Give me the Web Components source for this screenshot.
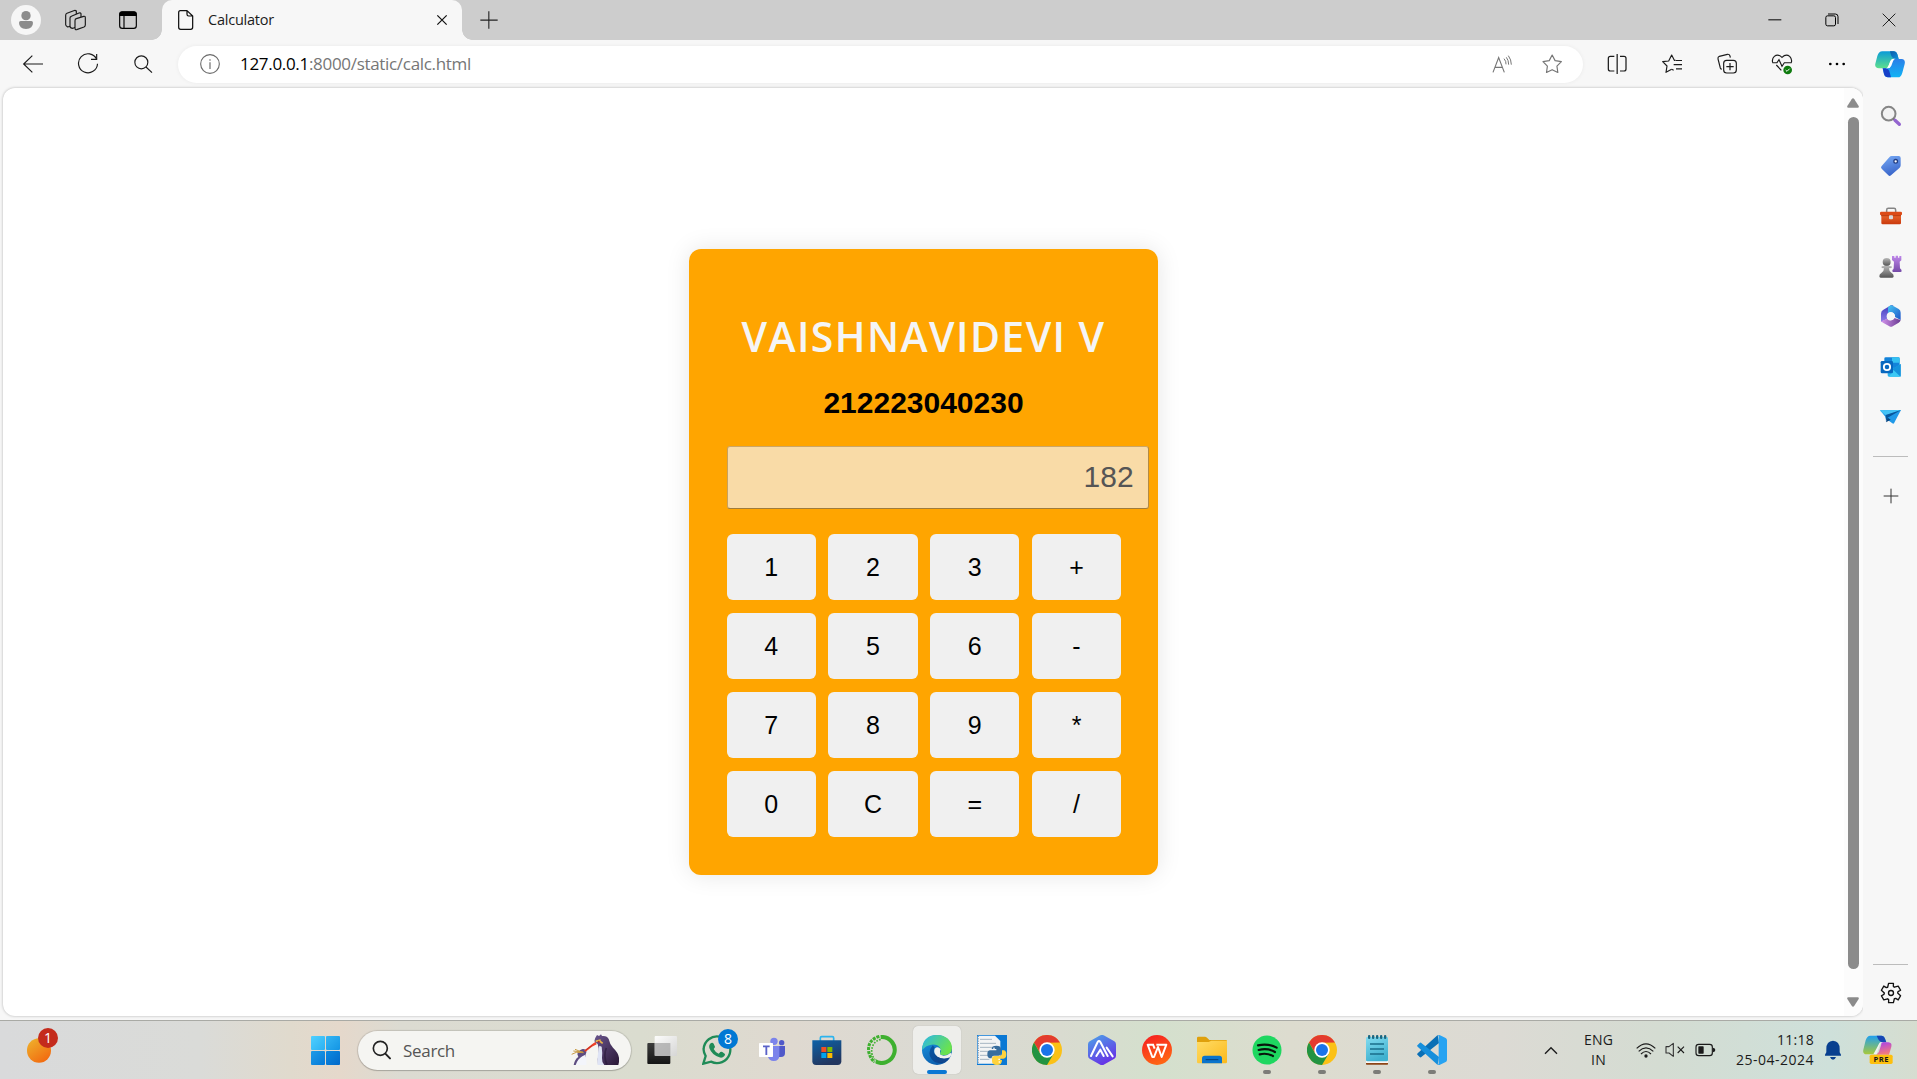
<!DOCTYPE html>
<html lang="en">
<head>
<meta charset="utf-8">
<title>Calculator</title>
<style>
html,body{margin:0;height:100%;overflow:hidden}
body{font-family:"Open Sans","Noto Sans",sans-serif;color:#1b1b1b}
</style>
</head>
<body>
<desktop-screen></desktop-screen>
<script>
const star=(cx,cy,R,r,n=5)=>{let p=[];for(let i=0;i<n*2;i++){const a=-Math.PI/2+i*Math.PI/n,q=i%2?r:R;p.push((cx+q*Math.cos(a)).toFixed(1)+','+(cy+q*Math.sin(a)).toFixed(1));}return p.join(' ');};
const lg=(id,a,b,x2=1,y2=1)=>`<linearGradient id="${id}" x1="0" y1="0" x2="${x2}" y2="${y2}"><stop offset="0" stop-color="${a}"/><stop offset="1" stop-color="${b}"/></linearGradient>`;
const gearPath=(cx,cy)=>{let d='';for(let i=0;i<6;i++){const t=-90+i*60;const pt=(a,r)=>{a=(t+a)*Math.PI/180;return (cx+r*Math.cos(a)).toFixed(1)+' '+(cy+r*Math.sin(a)).toFixed(1)};d+=(i?'L':'M')+pt(-14,30)+'L'+pt(14,30)+'L'+pt(19,21.5)+'L'+pt(30,20);}return d+'Z';};
const chromeMark=(c)=>`<circle cx="${c}" cy="150" r="45" fill="#fbc116"/>
<path d="M${c-39} 127.500A45 45 0 0 1 ${c+39} 127.500L${c} 128L${c-19} 161Z" fill="#e33b2e"/>
<path d="M${c-39} 127.500A45 45 0 0 0 ${c} 195L${c+20} 161L${c-20} 161Z" fill="#229342"/>
<circle cx="${c}" cy="150" r="23" fill="#fff"/><circle cx="${c}" cy="150" r="18" fill="#1a73e8"/>`;

/* name: [width, height, viewBox, markup]; three viewBox units make one pixel */
const ICONS={
avatar:[30,30,'33 15 90 90',`<circle cx="78" cy="60" r="45" fill="#f6f6f6"/><circle cx="78" cy="47" r="14" fill="#8c8c8c"/><path d="M57 68q0-5 5-5h32q5 0 5 5q0 18-21 19q-21-1-21-19z" fill="#8c8c8c"/>`],
workspaces:[23,22,'192 27 69 66',`<g fill="#cdcdcd" stroke="#1b1b1b" stroke-width="3.500" stroke-linejoin="round"><path d="M197 46q0-4 4-6l20-8q5-2 8 1l0 40l-26 8q-6-4-6-7z"/><path d="M210 54q0-4 4-5l23-10q5-1 6 2v34l-24 10q-9 0-9-6z"/><path d="M225 62q0-5 4-6l22-7q5-1 5 4v22q0 4-4 6l-22 8q-5 1-5-4z"/></g>`],
tabmenu:[20,20,'354 30 60 60',`<rect x="359" y="36" width="50" height="49" rx="8" fill="none" stroke="#000" stroke-width="3.500"/><path d="M358 48v-6q0-8 8-8h36q8 0 8 8v6z"/><path d="M372 47v38" stroke="#000" stroke-width="3.500"/>`],
doc:[18,22,'532 27 54 66',`<path d="M542 32h20l17 16v34q0 6-6 6h-30q-6 0-6-6V38q0-6 5-6zM562 32v11q0 5 5 5h12" fill="none" stroke="#111" stroke-width="3.700" stroke-linejoin="round"/>`],
tabclose:[14,14,'1306 41 42 42',`<path d="M1313 48l28 28M1341 48l-28 28" stroke="#111" stroke-width="3.700"/>`],
plus:[18,18,'1439 32 54 54',`<path d="M1440 59.500h52M1465.500 33v52" stroke="#222" stroke-width="3.300"/>`],
back:[22,20,'66 160 66 60',`<path d="M129 190H71M97 165L71 190L97 215" fill="none" stroke="#1b1b1b" stroke-width="3.500"/>`],
reload:[22,22,'231 159 66 66',`<path d="M290 178A28.500 28.500 0 1 0 292.500 191" fill="none" stroke="#1b1b1b" stroke-width="3.500"/><path d="M290 162v16h-17" fill="none" stroke="#1b1b1b" stroke-width="3.500"/>`],
search:[20,20,'399 161 60 60',`<circle cx="424" cy="186" r="19.500" fill="none" stroke="#1b1b1b" stroke-width="3.500"/><path d="M438 200l18 17" stroke="#1b1b1b" stroke-width="3.500"/>`],
info:[20,20,'601 161 60 60',`<circle cx="631" cy="191" r="28" fill="none" stroke="#6b6b6b" stroke-width="3.300"/><path d="M631 186v20" stroke="#6b6b6b" stroke-width="3.500"/><circle cx="631" cy="179" r="2.500" fill="#6b6b6b"/>`],
read:[20,20,'97 158 60 60',`<g fill="none" stroke="#767676" stroke-width="3.400"><path d="M100 213L117 169L134 213M106 198H128"/><path d="M133 172q7 8 6 17M140 168q7 9 7 22M146 163q9 12 9 27" stroke-width="3"/></g>`],
star:[22,22,'242 158 66 66',`<polygon points="${star(275.5,193,29,15)}" fill="none" stroke="#767676" stroke-width="3.500" stroke-linejoin="round"/>`],
split:[20,22,'442 159 60 66',`<g fill="none" stroke="#1b1b1b" stroke-width="3.700"><path d="M464 169H452q-6 0-6 6v32q0 6 6 6h12M472.500 162v60M481 169h12q6 0 6 6v32q0 6-6 6h-12"/></g>`],
favs:[22,22,'606 158 66 66',`<g fill="none" stroke="#1b1b1b" stroke-width="3.500" stroke-linejoin="round"><path d="M650 180h-4L638 164L629 182L611 184L624 197L621 216L638 207"/><path d="M651 180.500h18M644 193h25M651 205.500h18M638 207l6 3"/></g>`],
collect:[22,22,'771 159 66 66',`<g fill="none" stroke="#1b1b1b" stroke-width="3.500"><path d="M788 208q-3-1-4-4l-7-27q-1-6 4-8l24-6q6-1 8 5l1 5"/><rect x="794" y="181" width="38" height="38" rx="9"/><path d="M813 189v22M802 200h22"/></g>`],
health:[22,22,'936 161 66 66',`<path d="M941 190q-3-12 5-19q11-9 23 3q12-12 23-3q8 8 5 19M952 197l15 16" fill="none" stroke="#1b1b1b" stroke-width="3.500"/><path d="M940 190h14l6-9l9 20l7-11h22" fill="none" stroke="#1b1b1b" stroke-width="3.200"/><circle cx="986" cy="212" r="13" fill="#0f7b0f"/><path d="M980 212l4 4l8-8" fill="none" stroke="#fff" stroke-width="3"/>`],
dots:[18,6,'1107 182 54 18',`<circle cx="1114" cy="191" r="4"/><circle cx="1134" cy="191" r="4"/><circle cx="1154" cy="191" r="4"/>`],
copilot:[30,27,'1248 152 90 81',`<defs>${lg('a','#0a9bd8','#5ee08c',0,1)}${lg('b','#2b7fe8','#11b4f5',0,1)}${lg('c','#0b5aa8','#0f91dc')}</defs><path d="M1270 153h34q8 0 11 9l4 14h-14q-8 0-11 8l-8 20h-26q-14-1-11-14l6-23q4-14 15-14z" fill="url(#a)"/><path d="M1293 153h11q8 0 11 9l4 14h-10q-12 0-16-23z" fill="url(#c)"/><path d="M1317 231h-30q-9 0-12-10l-4-17h12q9 0 12-9l7-19h26q12 1 9 15l-7 26q-4 14-13 14z" fill="url(#b)"/><path d="M1296 231h-9q-9 0-12-10l-4-17h9q10 2 12 12z" fill="#1740c8"/><path d="M1304 175q-8 0-11 9l-4 11q-3 9-10 9h6q9 0 12-8l5-13q2-7 8-8z" fill="#fff"/>`],
min:[14,14,'923 38 42 42',`<path d="M924 58.500h39" stroke="#000" stroke-width="3"/>`],
restore:[14,14,'1094 38 42 42',`<rect x="1096.500" y="46.500" width="29" height="30" rx="5" fill="none" stroke="#000" stroke-width="3"/><path d="M1103 41h22q8 0 8 8v22" fill="none" stroke="#000" stroke-width="3"/>`],
close:[14,14,'1267 38 42 42',`<path d="M1269 40l38 38M1307 40l-38 38" stroke="#222" stroke-width="3"/>`],
sSearch:[22,22,'178 72 66 66',`<circle cx="204" cy="98" r="20.500" fill="#f2f2f2" stroke="#858585" stroke-width="6"/><path d="M218 113l6 6" stroke="#6b6b6b" stroke-width="5"/><path d="M223 118l13 12" stroke="#9465cf" stroke-width="10" stroke-linecap="round"/>`],
sTag:[22,22,'181 225 66 66',`<defs>${lg('a','#78abf5','#3b67cb',.3,1)}</defs><path d="M216 228h21q6 0 6 6v22q0 4-3 7L214 286q-4 4-8 0L186 266q-4-4 0-8l23-26q3-4 7-4z" fill="url(#a)"/><circle cx="228" cy="244" r="5.500" fill="#fff" stroke="#243f84" stroke-width="4"/>`],
sTool:[22,18,'180 383 66 54',`<defs>${lg('a','#ec6a31','#c9390c',0,1)}</defs><path d="M200 398v-6q0-5 5-5h17q5 0 5 5v6" fill="none" stroke="#858585" stroke-width="4.500"/><rect x="184" y="404" width="59" height="31" rx="4" fill="url(#a)"/><rect x="180" y="397" width="66" height="11" rx="4" fill="#dc4b18"/><path d="M183 409h60" stroke="#a42c06" stroke-width="2"/><rect x="207" y="408" width="12" height="12" rx="3" fill="#d8dadd"/>`],
sGame:[23,23,'179 523 69 69',`<defs>${lg('a','#b9b9b9','#555',0,1)}${lg('b','#bf87ea','#754aa8',0,1)}</defs><path d="M218 526h7v5h4v-6h7v6h4v-5h6v13l-5 4l1 20q5 3 5 8q0 3-4 3h-23l-1-6q4-1 4-5l1-20l-6-5z" fill="url(#b)"/><circle cx="202" cy="544" r="12" fill="url(#a)"/><path d="M187 557q15-4 30 0v5l-8 1q0 10 8 14q6 3 6 10q0 4-4 4h-35q-4 0-4-4q0-7 6-10q8-4 8-14l-7-1z" fill="url(#a)"/>`],
s365:[22,23,'181 675 66 69',`<defs>${lg('a','#3f3bbd','#8f7de8',0,1)}${lg('b','#45c7f3','#2254c8')}${lg('c','#d495ed','#6a3b92',1,0)}</defs><path d="M214 676l-24 14q-6 4-6 11v25l16-8q5-3 5-9v-18q0-5 4-8l13-8z" fill="url(#a)"/><path d="M213 676q4-1 8 2l16 9q6 4 6 11v22l-17-9q2-11-12-15q-9 1-9 9v-21q0-5 8-8z" fill="url(#b)"/><path d="M184 724l19-8q9 12 21-2l19 6q-1 5-6 8l-18 11q-5 3-10 0l-19-11q-5-3-6-4z" fill="url(#c)"/><circle cx="213" cy="709" r="12" fill="#f7f7f7"/>`],
sOutlook:[22,22,'181 825 66 66',`<rect x="194" y="829" width="46" height="40" rx="4" fill="#1383da"/><path d="M217 829h19q4 0 4 4v12h-23z" fill="#35c1f1"/><path d="M204 856l20 5l19-12v34q0 4-4 4h-31q-4 0-4-4z" fill="#29b0ec"/><path d="M224 864l19 23h-35z" fill="#3cc9f5"/><path d="M218 864l25-15v38z" fill="#1592dc"/><rect x="183" y="840" width="37" height="37" rx="4" fill="#0868bf"/><circle cx="202" cy="858" r="9.500" fill="none" stroke="#fff" stroke-width="5.500"/>`],
sSend:[22,16,'180 985 66 48',`<path d="M180 989l63-1l-21 40q-2 2-5 0l-18-13q-3-2-3-7z" fill="#2099e8"/><path d="M180 989l63-1l-45 16q-15-10-18-15z" fill="#44c3f5"/><path d="M197 1003l46-15l-40 23l-5 13z" fill="#09579c"/><path d="M198 1025l5-14l9 6z" fill="#06437f"/>`],
gear:[22,22,'1139 125 66 66',`<path d="${gearPath(1172,158)}" fill="none" stroke="#111" stroke-width="4" stroke-linejoin="round"/><circle cx="1172" cy="158" r="7.500" fill="none" stroke="#111" stroke-width="4"/>`],
sPlus:[16,16,'186 1223 48 48',`<path d="M188 1247h44M210 1225v44" stroke="#333" stroke-width="3"/>`],
up:[12,10,'0 0 36 30',`<path d="M18 1q2 0 4 3l13 20q2 5-3 5H4q-5 0-3-5L14 4q2-3 4-3z" fill="#8b8b8b"/>`],
down:[12,10,'0 0 36 30',`<path d="M18 29q2 0 4-3l13-20q2-5-3-5H4Q-1 1 1 6l13 20q2 3 4 3z" fill="#8b8b8b"/>`],
weather:[24,25,'81 82 72 75',`<defs>${lg('a','#eeb62e','#f26a10',.7,1)}</defs><rect x="81" y="83" width="72" height="73" rx="36" fill="url(#a)"/>`],
start:[29,29,'933 78 87 87',`<defs>${lg('a','#4fd0ff','#2bb0f2')}${lg('b','#35b5f3','#1395e4')}${lg('c','#1f9ce8','#0679d7')}${lg('d','#0d89e0','#0369c9')}</defs><rect x="933" y="78" width="42" height="42" rx="3" fill="url(#a)"/><rect x="978" y="78" width="42" height="42" rx="3" fill="url(#b)"/><rect x="933" y="123" width="42" height="42" rx="3" fill="url(#c)"/><rect x="978" y="123" width="42" height="42" rx="3" fill="url(#d)"/>`],
tSearch:[20,20,'1114 91 60 60',`<circle cx="1139" cy="116" r="21" fill="none" stroke="#222" stroke-width="5"/><path d="M1154 132l14 14" stroke="#222" stroke-width="6" stroke-linecap="round"/>`],
penguins:[50,32,'64 46 150 96',`<defs>${lg('a','#6b568f','#2a1836')}</defs>
<path d="M72 139q3-17 14-24l-3-9q4-12 16-15q8-1 11 5q1 5-2 11q2 16-1 32z" fill="#5d4c80"/><path d="M78 139q7-19 20-26l9-5q5 12 3 31z" fill="#f3f5fb"/><path d="M66 107l14-6l22 1M71 97l29 3M76 92l20 8" stroke="#c79b45" stroke-width="3" fill="none"/>
<path d="M103 96L128 76l10-7l3 8l-14 7L108 99z" fill="#ef4128"/><path d="M106 95l22-15" stroke="#9c1f18" stroke-width="1.500"/>
<path d="M134 68q3-13 8-19l6 3l6-5l3 5q15-2 20 9q3 15 13 26q16 15 18 30q1 13-2 22h-61q-3-18 2-34q2-18-3-29z" fill="url(#a)"/><path d="M144 139q-3-20 5-58l7 3q3 20 1 34q-1 12 7 21z" fill="#dfe4f5"/><path d="M138 68l15-4M150 67l9 7" stroke="#e7b44b" stroke-width="5"/><circle cx="147" cy="69" r="3" fill="#be2a24"/><path d="M170 88q-10 24 2 50" stroke="#22132f" stroke-width="5" fill="none" opacity=".5"/>`],
taskview:[30,30,'50 105 90 90',`<defs>${lg('a','#3c3c3c','#151515',0,1)}${lg('b','#fff','#d5d5d5')}</defs><rect x="51" y="129" width="69" height="63" rx="3" fill="url(#a)"/><rect x="73" y="108" width="67" height="60" rx="3" fill="url(#b)" opacity=".93"/><rect x="73" y="129" width="47" height="39" fill="#aaa" opacity=".75"/>`],
whatsapp:[30,30,'216 105 90 90',`<path d="M220 191l7-23q-7-12-6-21A40 40 0 1 1 243 185z" fill="none" stroke="#1f8b57" stroke-width="7"/><path d="M243 129q5-3 8 2l4 9q0 3-4 7q5 10 15 14l5-5q3-2 6 0l7 5q3 3-1 7q-6 7-15 4q-23-8-30-28q-2-10 5-15z" fill="#1f8b57"/>`],
teams:[30,30,'381 105 90 90',`<circle cx="432" cy="124" r="11" fill="#7b83eb"/><circle cx="455" cy="128" r="8" fill="#5059c9"/><path d="M440 138h25v21q0 12-12 12h-13z" fill="#5059c9"/><path d="M413 138h35v26q0 19-17 19q-14 0-18-14z" fill="#7b83eb"/><rect x="387" y="129" width="42" height="42" rx="2" fill="#fff"/><path d="M399 139h20M409 139v26" stroke="#5a62c8" stroke-width="5.500"/>`],
store:[30,30,'545 105 90 90',`<defs>${lg('a','#0d62a8','#22365f',.4,1)}</defs><path d="M570 124v-10q0-4 4-4h32q4 0 4 4v10" fill="none" stroke="#2cb4ee" stroke-width="5"/><path d="M546 121h87v63q0 11-11 11h-65q-11 0-11-11z" fill="url(#a)"/><path d="M573 141h15v15h-15z" fill="#f25022"/><path d="M591 141h15v15h-15z" fill="#7fba00"/><path d="M573 159h15v15h-15z" fill="#00a4ef"/><path d="M591 159h15v15h-15z" fill="#ffb900"/>`],
anaconda:[30,30,'711 105 90 90',`<path d="M752 111A39 39 0 1 1 733 182" fill="none" stroke="#3eb02f" stroke-width="12"/><path d="M748 109Q712 120 716 155Q720 174 733 186" fill="none" stroke="#3eb02f" stroke-width="9" stroke-dasharray="9 3"/><path d="M752 118Q724 126 725 158Q727 170 734 178" fill="none" stroke="#3eb02f" stroke-width="5" stroke-dasharray="5 4"/><path d="M736 179l-2 14" stroke="#ddd" stroke-width="3"/>`],
edge:[30,30,'876 105 90 90',`<defs>${lg('a','#2bb7ea','#6be34c',1,.5)}${lg('b','#1b9ce8','#0b5cab',.5,1)}${lg('c','#0b57a5','#0c3d85')}</defs><circle cx="921" cy="150" r="45" fill="url(#b)"/><path d="M877 141Q882 106 921 105Q963 107 966 144Q966 166 941 166Q930 166 930 160Q935 152 930 143Q922 132 904 134Q886 137 877 150z" fill="url(#a)"/><path d="M908 136Q890 158 905 178Q920 196 946 186Q956 180 960 172Q940 180 922 169Q906 158 914 142z" fill="url(#c)"/><path d="M930 160q-1 6 11 7q12 0 20-8l5 2l-7 12q-20 7-37-3q-13-11-8-24q10-9 18 2q0 3-2 4z" fill="#f1f1ee"/><path d="M960 172Q940 181 923 171Q918 167 915 163Q919 191 946 186z" fill="#10478f"/>`],
python:[30,30,'1041 105 90 90',`<rect x="1041" y="105" width="90" height="90" fill="#0a78d4"/><path d="M1043 107h52l16 16v68h-68z" fill="#f3f4f5"/><path d="M1050 118h36M1050 130h48M1050 142h40M1050 154h30M1050 166h24M1050 178h28" stroke="#a5b5c2" stroke-width="3"/><path d="M1045 108v82" stroke="#758b9d" stroke-width="3" stroke-dasharray="3 4"/><path d="M1085 147q0-10 14-10q14 0 14 10v12q0 8-8 8h-13q-7 0-7 8h-6q-7-2-7-13q0-11 9-11h18v-4z" fill="#386d9e"/><path d="M1116 151h5q8 1 8 12q0 13-9 13h-15v4h11q0 15-15 15q-15 0-15-11v-8q0-8 8-8h12q10 0 10-9z" fill="#ffd23c"/><circle cx="1092" cy="145" r="2.500" fill="#fff"/><circle cx="1108" cy="186" r="2.500" fill="#fff"/>`],
chrome:[30,30,'36 105 90 90',chromeMark(81)],
ai:[30,30,'201 105 90 90',`<defs>${lg('a','#4ba7e8','#6634e6',.5,1)}</defs><path d="M241 106q5-3 10 0l32 18q5 3 5 9v34q0 6-5 9l-32 18q-5 3-10 0l-32-18q-5-3-5-9v-34q0-6 5-9z" fill="url(#a)"/><path d="M213 168l20-42q4-6 8 0l22 42M229 168l12-19l10 19M260 143l18 26" fill="none" stroke="#fff" stroke-width="6" stroke-linecap="round" stroke-linejoin="round"/>`],
wps:[30,30,'366 105 90 90',`<defs>${lg('a','#f51b22','#ff6414',.4,1)}</defs><circle cx="411" cy="150" r="45" fill="url(#a)"/><path d="M402 134h-19l14 37h5l12-30l11 30h0l14-37h-30M399 134l5 12M425 171l-11-30" fill="none" stroke="#fff" stroke-width="6" stroke-linejoin="round"/>`],
folder:[30,30,'531 105 90 90',`<defs>${lg('a','#ffdc66','#fbb91b')}</defs><path d="M531 114q0-4 4-4h20q3 0 6 3l7 7h50q3 0 3 4v10h-90z" fill="#dfa00c"/><path d="M531 126h35l8-4h47v64q0 4-4 4h-82q-4 0-4-4z" fill="url(#a)"/><path d="M546 190v-15q0-8 8-8h44q8 0 8 8v15z" fill="#0b74cc"/><path d="M557 179h38" stroke="#073f79" stroke-width="3"/>`],
spotify:[30,30,'696 105 90 90',`<circle cx="741" cy="150" r="43.500" fill="#1ed760"/><path d="M714 136q30-7 56 7M716 150q27-7 49 6M719 163q22-5 40 5" fill="none" stroke="#08150c" stroke-width="6.500" stroke-linecap="round"/>`],
notepad:[30,30,'1026 105 90 90',`<defs>${lg('a','#83dcf1','#3fb1cf',.4,1)}</defs><rect x="1038" y="180" width="66" height="14" rx="2" fill="#8d4516"/><path d="M1038 180h66v9h-66z" fill="#f7f7f7"/><rect x="1038" y="111" width="66" height="73" rx="4" fill="url(#a)"/><g fill="#1c6780"><rect x="1044" y="105" width="7" height="12" rx="3"/><rect x="1056" y="105" width="7" height="12" rx="3"/><rect x="1068" y="105" width="7" height="12" rx="3"/><rect x="1080" y="105" width="7" height="12" rx="3"/><rect x="1092" y="105" width="7" height="12" rx="3"/></g><path d="M1050 132h42M1050 147h42M1050 162h42" stroke="#1a6d8a" stroke-width="4.500"/>`],
vscode:[30,30,'1191 105 90 90',`<path d="M1253 105l4 24l-54 43q-2 1-4-1l-6-6q-3-2 0-5z" fill="#0a6fb5"/><path d="M1253 195l4-24l-54-43q-2-1-4 1l-6 6q-3 2 0 5z" fill="#168fdc"/><path d="M1253 195q4 1 7-1l17-8q4-2 4-7v-58q0-5-4-7l-17-8q-3-2-7-1q3 1 3 5v80q0 4-3 5z" fill="#27a3f2"/>`],
chevron:[14,10,'132 313 42 30',`<path d="M135 339l18-18l18 18" fill="none" stroke="#1b1b1b" stroke-width="4"/>`],
wifi:[20,16,'408 303 60 48',`<g fill="none" stroke="#1b1b1b" stroke-width="3.500"><path d="M410 322q28-27 56 0"/><path d="M416 331q22-21 44 0"/><path d="M423 339q15-15 30 0"/></g><circle cx="438" cy="345" r="5" fill="#1b1b1b"/>`],
volume:[20,16,'497 306 60 48',`<path d="M500 320h9l13-10v39l-13-10h-9z" fill="none" stroke="#333" stroke-width="3.300" stroke-linejoin="round"/><path d="M535 320l19 19M554 320l-19 19" stroke="#1b1b1b" stroke-width="3.300"/>`],
battery:[21,14,'587 309 63 42',`<rect x="590" y="313" width="49" height="34" rx="8" fill="none" stroke="#1b1b1b" stroke-width="3.500"/><rect x="597" y="319" width="16" height="22" rx="2" fill="#1b1b1b"/><path d="M641 323q7 1 7 7t-7 7z" fill="#1b1b1b"/>`],
bell:[18,20,'972 301 54 60',`<path d="M999 303q20 2 20 24v11l4 7v3h-48v-3l4-7v-11q0-22 20-24z" fill="#083f8f"/><path d="M990 352h18q-3 8-9 8t-9-8z" fill="#083f8f"/>`],
copilotpre:[30,30,'1091 289 90 90',`<defs>${lg('a','#1f9ff0','#a8c93a',0,1)}${lg('b','#a53df0','#f27a7d',.3,1)}</defs><path d="M1113 291h33q8 0 11 9l4 11h-12q-9 0-12 9l-9 27h-26q-13-1-10-14l7-28q4-14 14-14z" fill="url(#a)"/><path d="M1132 291h14q8 0 11 9l4 11h-10q-12 0-19-20z" fill="#1646b4"/><path d="M1146 311h21q12 1 9 13l-7 24h-39q7-4 9-9l6-19q2-6 1-9z" fill="url(#b)"/><path d="M1142 311h9q-8 1-10 9l-9 27h-10z" fill="#eef2f0"/><rect x="1111" y="348" width="69" height="28" rx="5" fill="#fdbf0d"/><text x="1146" y="370" text-anchor="middle" font-family="Open Sans,sans-serif" font-weight="700" font-size="23" letter-spacing="1.500" fill="#181818">PRE</text>`]
};

class Base extends HTMLElement{
  connectedCallback(){
    if(this.shadowRoot)return;
    const t=document.createElement('template');
    t.innerHTML='<style>*{box-sizing:border-box}</style>'+this.view();
    this.attachShadow({mode:'open'}).append(t.content.cloneNode(true));
    if(this.ready)this.ready();
  }
}
const def=(n,view,ready)=>customElements.define(n,class extends Base{view(){return view(this)}ready(){ready&&ready(this)}});
const ic=n=>`<ui-icon name="${n}"></ui-icon>`;

def('ui-icon',e=>{const[w,h,v,b]=ICONS[e.getAttribute('name')];
return`<style>:host{display:block;flex:none;width:${w}px;height:${h}px}svg{display:block}</style><svg width="${w}" height="${h}" viewBox="${v}">${b}</svg>`});

/* single line of text whose tracking is set so that it fills the given width */
def('fit-text',e=>`<style>:host{display:block;flex:none;width:${e.getAttribute('w')}px;white-space:nowrap}span{display:inline-block}</style><span><slot></slot></span>`,
e=>{const s=e.shadowRoot.querySelector('span'),n=e.textContent.length,w=s.getBoundingClientRect().width;
s.style.letterSpacing=((+e.getAttribute('w')-w)/n).toFixed(3)+'px';});

def('tab-strip',()=>`<style>
:host{display:flex;height:40px;background:#cdcdcd;align-items:center}
.c{display:flex;justify-content:center;width:52px}
.tab{position:relative;display:flex;align-items:center;align-self:stretch;width:300px;margin-left:6px;padding:0 13px 0 15px;background:#f7f7f7;border-radius:10px 10px 0 0;font-size:14.5px;color:#1b1b1b}
.tab:before,.tab:after{content:"";position:absolute;bottom:0;width:10px;height:10px}
.tab:before{left:-10px;background:radial-gradient(circle at 0 0,#cdcdcd 9.500px,#f7f7f7 10px)}
.tab:after{right:-10px;background:radial-gradient(circle at 100% 0,#cdcdcd 9.500px,#f7f7f7 10px)}
.tab fit-text{margin:0 auto 2px 13px}
.sp{flex:1}.w{display:flex;justify-content:center;width:57px}
</style>
<div class="c">${ic('avatar')}</div><div class="c" style="width:47px">${ic('workspaces')}</div><div class="c" style="width:57px">${ic('tabmenu')}</div>
<div class="tab">${ic('doc')}<fit-text w="66">Calculator</fit-text>${ic('tabclose')}</div>
<div class="c" style="margin-left:1px">${ic('plus')}</div><div class="sp"></div>
<div class="w">${ic('min')}</div><div class="w">${ic('restore')}</div><div class="w">${ic('close')}</div>`);

def('tool-bar',()=>`<style>
:host{display:flex;height:48px;background:#f7f7f7;align-items:center;padding-left:5px}
.c{display:flex;justify-content:center;width:55px}
.url{display:flex;align-items:center;width:1405px;height:37px;margin:0 6px 0 8px;padding:0 20px 0 22px;background:#fff;border-radius:19px;box-shadow:0 0 4px rgba(0,0,0,.06);font-size:17px;color:#767676}
.url fit-text{margin:0 auto 1px 20px}b{font-weight:400;color:#000}
.url ui-icon+ui-icon{margin-left:29px}
</style>
<div class="c">${ic('back')}</div><div class="c">${ic('reload')}</div><div class="c">${ic('search')}</div>
<div class="url">${ic('info')}<fit-text w="231"><b>127.0.0.1</b>:8000/static/calc.html</fit-text>${ic('read')}${ic('star')}</div>
<div class="c">${ic('split')}</div><div class="c">${ic('favs')}</div><div class="c">${ic('collect')}</div><div class="c">${ic('health')}</div><div class="c">${ic('dots')}</div><div class="c" style="width:52px">${ic('copilot')}</div>`);

def('side-bar',()=>`<style>
:host{display:flex;flex-direction:column;align-items:center;width:54px;flex:none;background:#f7f7f7;padding:2px 0 0 1px}
.c{display:flex;align-items:center;justify-content:center;height:50.200px}
hr{width:35px;height:1px;border:0;margin:0;background:#bcbcbc}.sp{flex:1}
</style>
<div style="height:.8px"></div>
${['sSearch','sTag','sTool','sGame','s365','sOutlook','sSend'].map(n=>`<div class="c">${ic(n)}</div>`).join('')}
<hr style="margin-top:14px"><div class="c" style="margin-top:14px">${ic('sPlus')}</div><div class="sp"></div><hr><div class="c" style="height:55px">${ic('gear')}</div>`);

def('scroll-bar',()=>`<style>
:host{display:flex;flex-direction:column;align-items:center;justify-content:space-between;width:19px;background:#fcfcfc;padding:10px 1px 9px 0}
i{width:11px;flex:1;margin:9px 0 28px;border-radius:6px;background:#8b8b8b}
</style>${ic('up')}<i></i>${ic('down')}`);

def('calc-key',()=>`<style>:host{display:flex;align-items:center;justify-content:center;height:66.250px;border-radius:6px;background:#f0f0f0;font:25px "Liberation Sans",sans-serif;color:#000}</style><slot></slot>`);

def('calc-card',()=>`<style>
:host{display:flex;flex-direction:column;align-items:center;width:468.750px;height:626px;padding:63px 37.500px 0;border-radius:12px;background:orange;box-shadow:0 0 25px rgba(0,0,0,.1)}
h1{margin:0;font:600 41px/48px "Open Sans",sans-serif;color:#f5f5f5;height:48px;flex:none}
h2{margin:0;font:700 30px/36px "Liberation Sans",sans-serif;color:#000;margin-top:25px}
.out{align-self:flex-start;flex:none;width:422px;height:63px;margin-top:25px;padding:0 14px;border:1px solid #c09a55;border-color:#cba668 #b58b43 #a07c3c #c7a160;border-radius:3px;background:#f9dba7;color:#555;font:30px/59px "Liberation Sans",sans-serif;text-align:right}
.keys{align-self:flex-start;width:394.500px;display:grid;grid-template-columns:repeat(4,1fr);gap:12.800px 12.500px;margin-top:25px}
</style>
<h1><fit-text w="364">VAISHNAVIDEVI V</fit-text></h1><h2>212223040230</h2><div class="out">182</div>
<div class="keys">${[...'123+456-789*0C=/'].map(k=>`<calc-key>${k}</calc-key>`).join('')}</div>`);

def('web-view',()=>`<style>
:host{display:flex;flex:1;margin:0 0 4px 3px;background:#fff;border-radius:12px;overflow:hidden;box-shadow:0 0 3px rgba(0,0,0,.28)}
main{flex:1;display:flex;justify-content:center;align-items:flex-start;padding:161px 0 0 0}
</style><main><calc-card></calc-card></main><scroll-bar></scroll-bar>`);

def('task-item',e=>`<style>
:host{display:grid;place-items:center;position:relative;width:55px;height:58px;flex:none}
.t{display:grid;place-items:center;width:48px;height:48px;border-radius:5px}
:host([active]) .t{background:#eeeeeb;box-shadow:0 0 1px rgba(0,0,0,.25)}
:host([run]):after,:host([active]):after{content:"";position:absolute;bottom:5px;width:8px;height:4px;border-radius:2px;background:#7c7c78}
:host([active]):after{width:20px;background:#0a78d4}
span{position:absolute;left:29px;top:8px;width:20px;height:20px;border-radius:50%;background:#0078d4;color:#fff;font-size:14px;line-height:20px;text-align:center}
</style><div class="t">${ic(e.getAttribute('icon'))}</div>${e.hasAttribute('badge')?`<span>${e.getAttribute('badge')}</span>`:''}`);

def('task-bar',()=>`<style>
:host{display:flex;align-items:center;height:59px;border-top:1px solid #a9aaa5;background:linear-gradient(90deg,#d9dadb 0,#dadbd8 200px,#e0dacd 290px,#e5d8cb 340px,#dcdbd2 400px,#dadccf 640px,#dfd9d0 790px,#dbdad3 930px,#d9dbd0 1060px,#d4e0cd 1160px,#dddccf 1290px,#dcdad4 1500px,#d4dcd2 1660px,#cee0da 1830px,#d6ddd0 1917px)}
.wx{position:relative;padding:1px 0 0 27px;width:311px}
.wx span{position:absolute;left:38px;top:-9px;width:20px;height:20px;border-radius:50%;background:#c42b1c;color:#fff;font-size:14px;line-height:20px;text-align:center}
.s{display:flex;align-items:center;width:273px;height:39px;margin:0 3px 0 18px;padding:0 10px 0 14px;border-radius:20px;background:#f5f5f2;box-shadow:0 0 1px 1px rgba(0,0,0,.12),0 1px 1px rgba(0,0,0,.15);font-size:17px;color:#555}
.s fit-text{margin:0 auto 0 11px}
.sp{flex:1}
.col{display:flex;flex-direction:column;align-items:center;font-size:14px;line-height:20px;margin:0 23px 0 26px}
.time{align-items:flex-end;margin:0 10px 0 20px}
</style>
<div class="wx">${ic('weather')}<span>1</span></div>
<div>${ic('start')}</div>
<div class="s">${ic('tSearch')}<fit-text w="52">Search</fit-text>${ic('penguins')}</div>
${[['taskview'],['whatsapp','badge="8"'],['teams'],['store'],['anaconda'],['edge','active'],['python'],['chrome'],['ai'],['wps'],['folder'],['spotify','run'],['chrome','run'],['notepad','run'],['vscode','run']].map(([n,a=''])=>`<task-item icon="${n}" ${a}></task-item>`).join('')}
<div class="sp"></div>
${ic('chevron')}
<div class="col"><fit-text w="29">ENG</fit-text><fit-text w="15">IN</fit-text></div>
${ic('wifi')}<ui-icon name="volume" style="margin-left:9px"></ui-icon><ui-icon name="battery" style="margin-left:10px"></ui-icon>
<div class="col time"><fit-text w="37">11:18</fit-text><fit-text w="78">25-04-2024</fit-text></div>
${ic('bell')}<ui-icon name="copilotpre" style="margin:0 24px 0 21px"></ui-icon>`);

def('desktop-screen',()=>`<style>
:host{display:flex;flex-direction:column;width:1917px;height:1079px;background:#f7f7f7}
.mid{flex:1;display:flex;min-height:0}
</style><tab-strip></tab-strip><tool-bar></tool-bar><div class="mid"><web-view></web-view><side-bar></side-bar></div><task-bar></task-bar>`);
</script>
</body>
</html>
